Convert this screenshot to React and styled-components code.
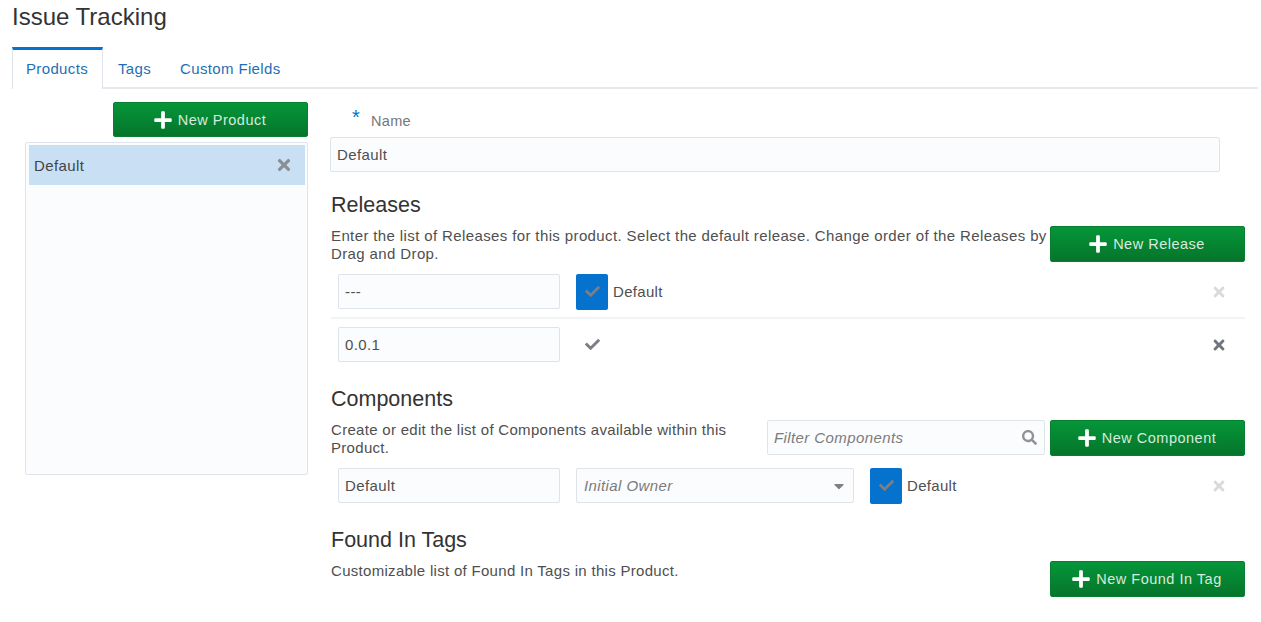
import styled, { createGlobalStyle } from "styled-components";
import { FaPlus, FaTimes, FaCheck, FaSearch, FaCaretDown } from "react-icons/fa";

const GlobalStyle = createGlobalStyle`
  html, body {
    margin: 0;
    padding: 0;
    background: #fff;
    overflow: hidden;
  }
  * { box-sizing: border-box; }
  body {
    font-family: "Liberation Sans", Arial, sans-serif;
    font-size: 15px;
    color: #4f4f4f;
  }
`;

const Page = styled.div`
  width: 1261px;
  height: 622px;
  padding: 0 3px 0 12px;
  overflow: hidden;
`;

const Title = styled.h1`
  margin: 0;
  height: 47px;
  padding-top: 3px;
  font-size: 24px;
  line-height: 28px;
  font-weight: 400;
  color: #333;
`;

const Tabs = styled.div`
  display: flex;
  height: 42px;
  border-bottom: 2px solid #e4e9ee;
`;

const Tab = styled.div`
  height: ${(p) => (p.$active ? "42px" : "40px")};
  padding: 11px 14px 0 ${(p) => (p.$active ? "13px" : "15px")};
  font-size: 15px;
  line-height: 16px;
  letter-spacing: 0.35px;
  color: #1f6fb5;
  background: #fff;
  border-top: ${(p) => (p.$active ? "3px solid #0572ce" : "3px solid transparent")};
  border-left: ${(p) => (p.$active ? "1px solid #dfe4ea" : "none")};
  border-right: ${(p) => (p.$active ? "1px solid #dfe4ea" : "none")};
`;

const Body = styled.div`
  display: flex;
  padding-top: 13px;
`;

const LeftCol = styled.div`
  width: 296px;
  display: flex;
  flex-direction: column;
  align-items: flex-end;
  gap: 5px;
`;

const ListBox = styled.div`
  width: 283px;
  height: 333px;
  padding: 2px 2px 2px 3px;
  background: #fbfcfe;
  border: 1px solid #dfe4ea;
  border-radius: 2px;
`;

const ListItem = styled.div`
  height: 40px;
  display: flex;
  align-items: center;
  justify-content: space-between;
  padding: 0 12px 0 5px;
  background: #c9e0f4;
  font-size: 15px;
  letter-spacing: 0.4px;
  color: #444;
`;

const RightCol = styled.div`
  margin-left: 23px;
  width: 914px;
`;

const NameLabel = styled.div`
  display: flex;
  height: 35px;
  padding: 6px 0 0 21px;
  font-size: 14.5px;
  letter-spacing: 0.3px;
  color: #767676;
  line-height: 26px;
`;

const Star = styled.span`
  width: 19px;
  color: #0572ce;
  font-size: 20px;
  line-height: 18px;
`;

const Field = styled.div`
  width: ${(p) => p.$w}px;
  height: 35px;
  flex: none;
  display: flex;
  align-items: center;
  justify-content: space-between;
  padding: 0 6px;
  background: #fbfcfe;
  border: 1px solid #dfe4ea;
  border-radius: 2px;
  font-size: 15px;
  letter-spacing: 0.4px;
  color: #4f4f4f;
`;

const NameField = styled(Field)`
  margin-left: -1px;
`;

const HintField = styled(Field)`
  color: #7b7b7b;
  font-style: italic;
`;

const SelectField = styled(HintField)`
  margin-left: 16px;
  padding-left: 7px;
`;

const SectionTitle = styled.h2`
  margin: ${(p) => p.$top}px 0 0;
  font-size: 21.5px;
  line-height: 24px;
  font-weight: 400;
  color: #333;
`;

const DescRow = styled.div`
  display: flex;
  align-items: ${(p) => (p.$start ? "flex-start" : "center")};
  justify-content: space-between;
  margin-top: 9px;
`;

const Desc = styled.p`
  margin: 0 0 -1px;
  width: ${(p) => p.$w}px;
  padding-top: 1px;
  font-size: 15px;
  line-height: 18px;
  letter-spacing: ${(p) => p.$sp}px;
  color: #4f4f4f;
`;

const FilterGroup = styled.div`
  display: flex;
  gap: 5px;
`;

const GreenButton = styled.button`
  width: 195px;
  height: ${(p) => p.$h || 36}px;
  flex: none;
  display: flex;
  align-items: center;
  justify-content: center;
  gap: 5px;
  padding: 0 2px 0 0;
  border: 1px solid #06802f;
  border-radius: 2px;
  background: linear-gradient(#059639, #05752b);
  color: #d8eadd;
  font-family: inherit;
  font-size: 14.5px;
  letter-spacing: 0.5px;
  svg { color: #fff; font-size: 20px; }
`;

const Row = styled.div`
  display: flex;
  align-items: center;
  height: ${(p) => p.$h}px;
  padding: ${(p) => p.$pad || 0}px 0 0 7px;
  border-bottom: ${(p) => (p.$line ? "2px solid #f2f3f5" : "none")};
`;

const Check = styled.span`
  width: 32px;
  height: 36px;
  margin-left: ${(p) => p.$left}px;
  flex: none;
  display: flex;
  align-items: center;
  justify-content: center;
  border-radius: 2px;
  background: ${(p) => (p.$on ? "#0572ce" : "transparent")};
  color: #7a7f86;
  font-size: 15px;
`;

const RowLabel = styled.span`
  margin-left: 5px;
  font-size: 15px;
  letter-spacing: 0.3px;
  color: #4f4f4f;
`;

const Remove = styled.span`
  margin-left: auto;
  margin-right: 18px;
  display: flex;
  font-size: 16px;
  color: ${(p) => (p.$off ? "#d8dadc" : "#6f757c")};
`;

const ItemRemove = styled.span`
  display: flex;
  font-size: 18px;
  color: #8a8f95;
`;

const SearchIcon = styled.span`
  display: flex;
  font-size: 15px;
  color: #8f9296;
  margin-right: 1px;
`;

const CaretIcon = styled.span`
  display: flex;
  font-size: 16px;
  color: #7c8085;
`;

const App = () => {
  return (
    <Page>
      <GlobalStyle />
      <Title>Issue Tracking</Title>
      <Tabs>
        <Tab $active>Products</Tab>
        <Tab>Tags</Tab>
        <Tab>Custom Fields</Tab>
      </Tabs>
      <Body>
        <LeftCol>
          <GreenButton $h={35}>
            <FaPlus />
            New Product
          </GreenButton>
          <ListBox>
            <ListItem>
              Default
              <ItemRemove>
                <FaTimes />
              </ItemRemove>
            </ListItem>
          </ListBox>
        </LeftCol>
        <RightCol>
          <NameLabel>
            <Star>*</Star>
            Name
          </NameLabel>
          <NameField $w={890}>Default</NameField>
          <SectionTitle $top={21}>Releases</SectionTitle>
          <DescRow>
            <Desc $w={718} $sp={0.38}>
              Enter the list of Releases for this product. Select the default release. Change order of the Releases by
              Drag and Drop.
            </Desc>
            <GreenButton>
              <FaPlus />
              New Release
            </GreenButton>
          </DescRow>
          <Row $h={57} $pad={4} $line>
            <Field $w={222}>---</Field>
            <Check $on $left={16}>
              <FaCheck />
            </Check>
            <RowLabel>Default</RowLabel>
            <Remove $off>
              <FaTimes />
            </Remove>
          </Row>
          <Row $h={51}>
            <Field $w={222}>0.0.1</Field>
            <Check $left={16}>
              <FaCheck />
            </Check>
            <Remove>
              <FaTimes />
            </Remove>
          </Row>
          <SectionTitle $top={17}>Components</SectionTitle>
          <DescRow>
            <Desc $w={405} $sp={0.3}>
              Create or edit the list of Components available within this Product.
            </Desc>
            <FilterGroup>
              <HintField $w={278}>
                Filter Components
                <SearchIcon>
                  <FaSearch />
                </SearchIcon>
              </HintField>
              <GreenButton>
                <FaPlus />
                New Component
              </GreenButton>
            </FilterGroup>
          </DescRow>
          <Row $h={59}>
            <Field $w={222}>Default</Field>
            <SelectField $w={278}>
              Initial Owner
              <CaretIcon>
                <FaCaretDown />
              </CaretIcon>
            </SelectField>
            <Check $on $left={16}>
              <FaCheck />
            </Check>
            <RowLabel>Default</RowLabel>
            <Remove $off>
              <FaTimes />
            </Remove>
          </Row>
          <SectionTitle $top={13}>Found In Tags</SectionTitle>
          <DescRow $start>
            <Desc $w={405} $sp={0.3}>
              Customizable list of Found In Tags in this Product.
            </Desc>
            <GreenButton>
              <FaPlus />
              New Found In Tag
            </GreenButton>
          </DescRow>
        </RightCol>
      </Body>
    </Page>
  );
};

export default App;
